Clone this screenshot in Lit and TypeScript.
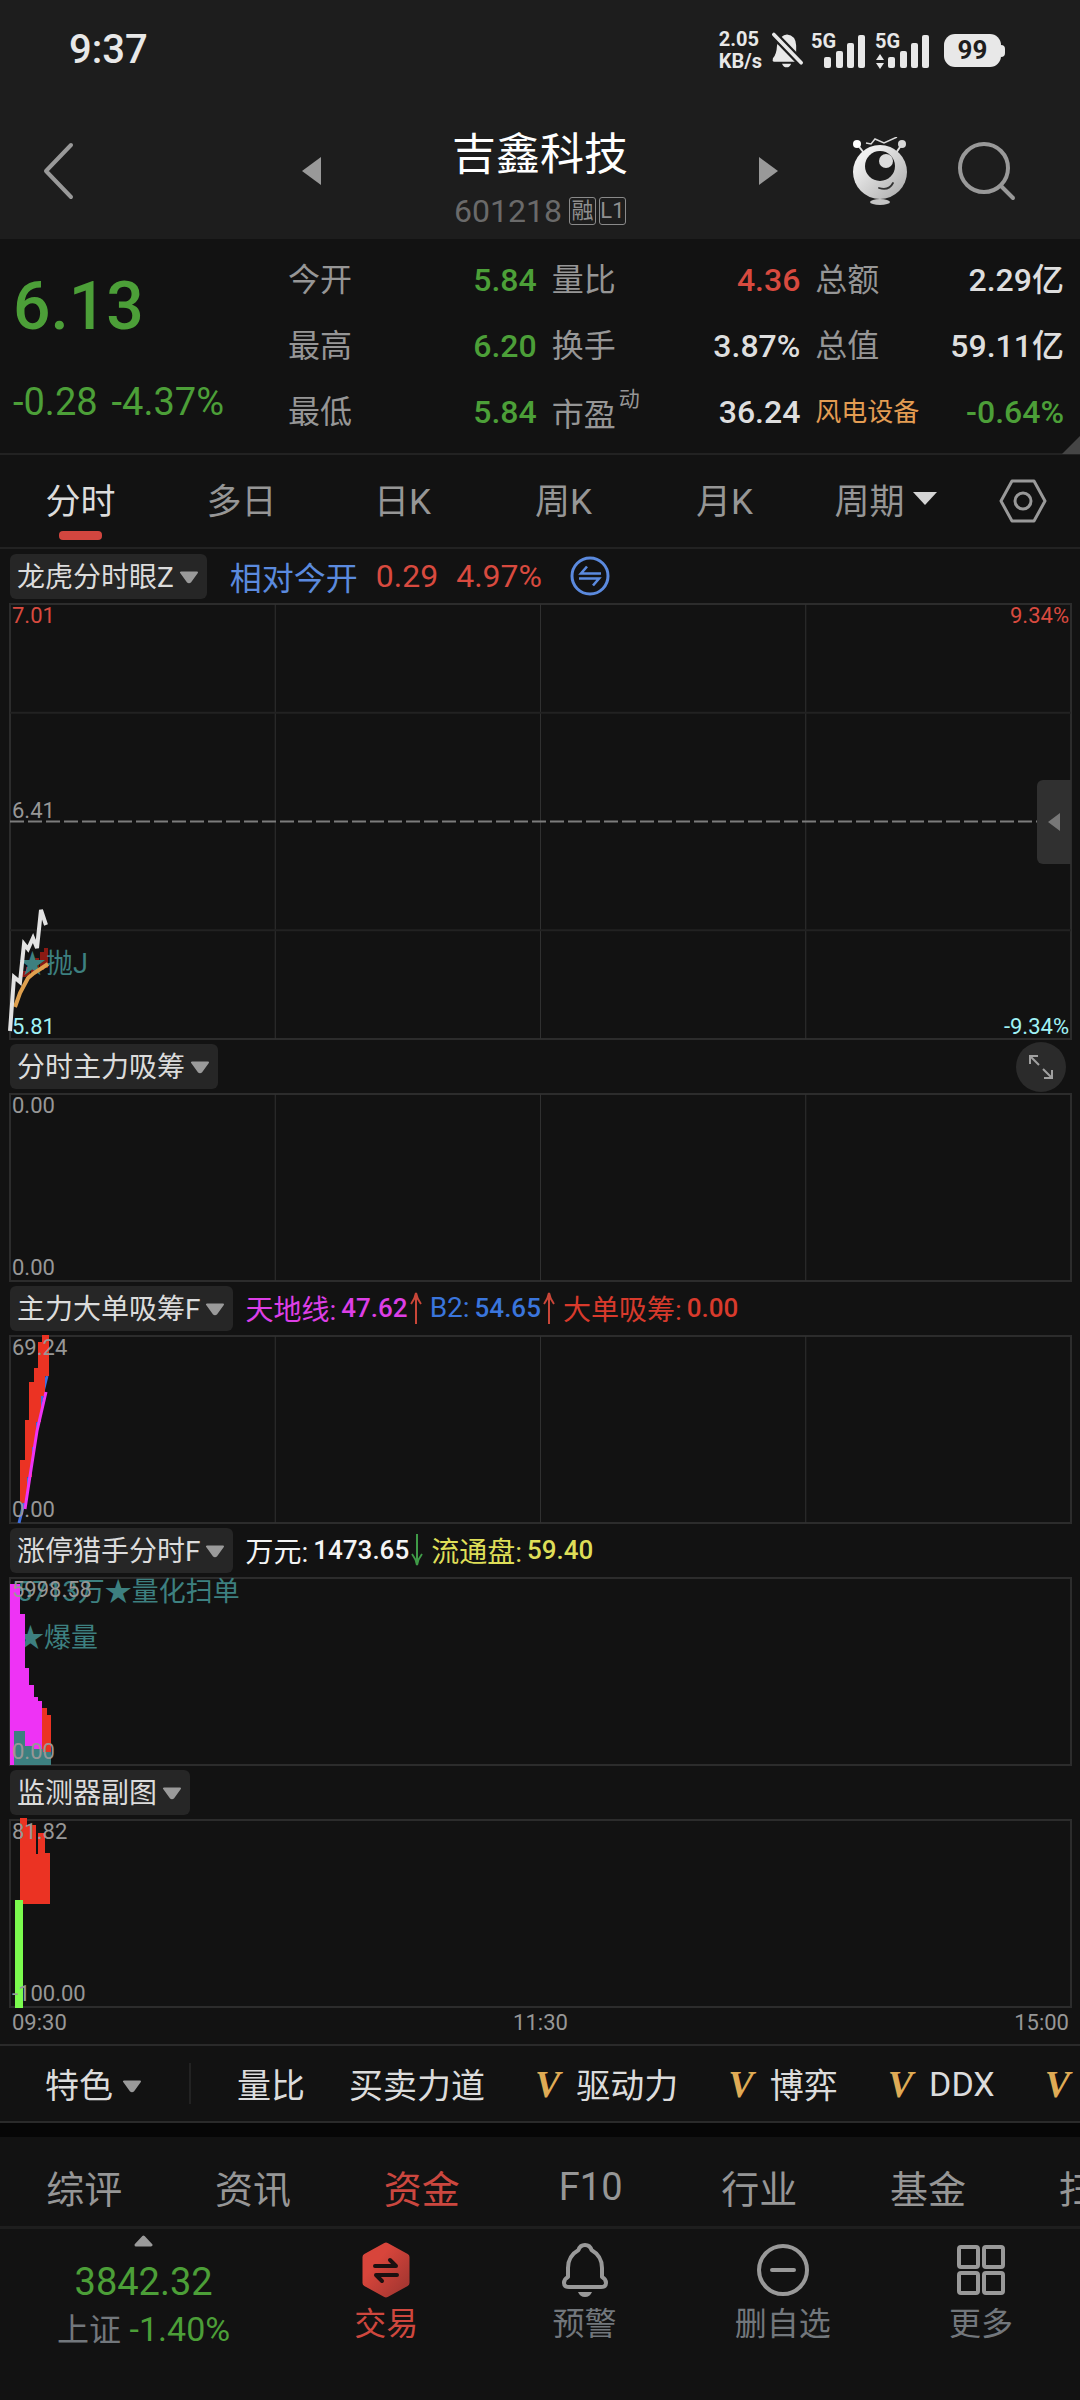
import { LitElement, html, svg, css, nothing } from "lit";
import type { TemplateResult, SVGTemplateResult } from "lit";
import { customElement, state } from "lit/decorators.js";
import { classMap } from "lit/directives/class-map.js";

/* x, y, width, height, colour */
type Bar = [number, number, number, number, string];

interface Legend {
  label: string;
  value: string;
  tone: string;
  trend?: "up" | "down";
}

const RED = "#eb3323";
const MAGENTA = "#ee33f5";
const TEAL = "#3d8080";
const LIME = "#7bfb4e";
const DARK_RED = "#8b1a14";

const QUOTES = [
  { label: "今开", value: "5.84", tone: "green" },
  { label: "量比", value: "4.36", tone: "red" },
  { label: "总额", value: "2.29亿", tone: "light" },
  { label: "最高", value: "6.20", tone: "green" },
  { label: "换手", value: "3.87%", tone: "light" },
  { label: "总值", value: "59.11亿", tone: "light" },
  { label: "最低", value: "5.84", tone: "green" },
  { label: "市盈", note: "动", value: "36.24", tone: "light" },
  { label: "风电设备", sector: true, value: "-0.64%", tone: "green" },
];

const PERIODS = ["分时", "多日", "日K", "周K", "月K"];

const TOOLS = [
  { label: "量比", vip: false },
  { label: "买卖力道", vip: false },
  { label: "驱动力", vip: true },
  { label: "博弈", vip: true },
  { label: "DDX", vip: true },
  { label: "", vip: true },
];

const SECTIONS = ["综评", "资讯", "资金", "F10", "行业", "基金", "扫雷"];

const PRICE_BARS: Bar[] = [
  [12, 367, 4, 6, DARK_RED],
  [16, 363, 4, 9, DARK_RED],
  [21, 358, 4, 12, DARK_RED],
  [25, 354, 4, 13, DARK_RED],
  [30, 348, 4, 18, DARK_RED],
  [34, 344, 4, 20, DARK_RED],
];

const ORDER_BARS: Bar[] = [
  [10, 124, 7, 43, RED],
  [15, 84, 7, 57, RED],
  [19, 46, 7, 65, RED],
  [24, 32, 7, 54, RED],
  [28, 6, 7, 54, RED],
  [32, -1, 7, 41, RED],
];

const HUNTER_BARS: Bar[] = [
  [0, 6, 10, 181, MAGENTA],
  [10, 36, 5, 151, MAGENTA],
  [15, 90, 4, 97, MAGENTA],
  [19, 107, 5, 80, MAGENTA],
  [24, 119, 4, 68, MAGENTA],
  [28, 123, 4, 64, MAGENTA],
  [32, 130, 5, 57, RED],
  [37, 137, 4, 50, RED],
  [4, 153, 11, 34, TEAL],
  [15, 168, 9, 19, TEAL],
  [24, 171, 9, 16, TEAL],
  [33, 174, 8, 13, TEAL],
];

const MONITOR_BARS: Bar[] = [
  [10, -2, 7, 86, RED],
  [17, 5, 9, 79, RED],
  [26, 34, 2, 50, RED],
  [28, 13, 7, 71, RED],
  [35, 33, 5, 51, RED],
  [5, 80, 8, 108, LIME],
];

const drawBars = (bars: Bar[]) =>
  bars.map(([x, y, w, h, fill]) => svg`<rect x=${x} y=${y} width=${w} height=${h} fill=${fill} />`);

const frame = svg`<rect width="100%" height="100%" fill="none" stroke="#2c2c2c" stroke-width="2" />`;

const columns = svg`
  <line x1="25%" x2="25%" y1="0" y2="100%" stroke="#303030" />
  <line x1="50%" x2="50%" y1="0" y2="100%" stroke="#303030" />
  <line x1="75%" x2="75%" y1="0" y2="100%" stroke="#303030" />`;

const caret = html`<svg class="caret" width="20" height="13" viewBox="0 0 20 13" aria-hidden="true">
  <path d="M2 1.5H18L11.5 10.5Q10 12 8.5 10.5Z" fill="#9a9a9a" stroke="#9a9a9a" stroke-width="2" stroke-linejoin="round" />
</svg>`;

@customElement("app-root")
export class AppRoot extends LitElement {
  @state() private period = "分时";
  @state() private section = "资金";

  static styles = css`
    :host {
      display: block;
      min-height: 100vh;
      overflow: hidden;
      background: #121212;
      color: #dcdcdc;
      font-family: Roboto, "Noto Sans CJK SC", sans-serif;
      font-size: 32px;
    }
    * { box-sizing: border-box; }
    button {
      margin: 0;
      padding: 0;
      border: 0;
      background: none;
      color: inherit;
      font: inherit;
      cursor: pointer;
    }
    svg { display: block; flex: none; }
    .caret { margin-top: 6px; }
    .green { color: #4c9f38; }
    .red { color: #d84a3f; }
    .light { color: #dedede; }

    /* status bar */
    .top { background: #1d1d1d; }
    .status {
      display: flex;
      justify-content: space-between;
      align-items: center;
      height: 100px;
      padding: 0 79px 0 69px;
      color: #e8e8e8;
    }
    .clock { font-size: 40px; font-weight: 500; line-height: 48px; }
    .signals { display: flex; align-items: center; gap: 8px; }
    .speed { margin-right: 2px; font-size: 20px; line-height: 22px; font-weight: 700; }
    .speed span { display: block; }
    .mute { width: 31px; }
    .tag5g { font-size: 20px; font-weight: 700; }
    .battery {
      width: 57px;
      height: 33px;
      margin-left: 5px;
      border-radius: 11px;
      background: #e8e8e8;
      color: #1d1d1d;
      font-size: 26px;
      font-weight: 700;
      line-height: 33px;
      text-align: center;
      position: relative;
    }
    .battery::after {
      content: "";
      position: absolute;
      right: -4px;
      top: 11px;
      width: 4px;
      height: 12px;
      border-radius: 0 4px 4px 0;
      background: #e8e8e8;
    }

    /* title bar */
    .title-bar {
      display: grid;
      grid-template-columns: 1fr 44% 1fr;
      align-items: center;
      height: 139px;
      padding-top: 3px;
    }
    .back { padding-left: 42px; justify-self: start; }
    .switcher { display: flex; justify-content: space-between; align-items: center; }
    .stock { text-align: center; padding-top: 16px; }
    .stock h1 {
      margin: 0;
      color: #fff;
      font-size: 44px;
      font-weight: 400;
      line-height: 64px;
    }
    .code {
      display: flex;
      justify-content: center;
      align-items: center;
      gap: 3px;
      color: #6a6a6a;
      line-height: 48px;
    }
    .code b {
      width: 27px;
      height: 28px;
      border: 1px solid #8a8a8a;
      border-radius: 3px;
      color: #8f8f8f;
      font-size: 22px;
      font-weight: 400;
      line-height: 26px;
      text-align: center;
    }
    .code b:first-of-type { margin-left: 4px; }
    .actions { display: flex; align-items: center; justify-content: flex-end; gap: 51px; padding-right: 64px; }

    /* quote */
    .quote {
      display: grid;
      grid-template-columns: 275fr 776fr;
      height: 216px;
      padding: 8px 16px 0 13px;
      border-bottom: 2px solid #222;
      position: relative;
    }
    .quote::after {
      content: "";
      position: absolute;
      right: 0;
      bottom: -1px;
      border-style: solid;
      border-width: 0 0 18px 18px;
      border-color: transparent transparent #454545 transparent;
    }
    .price { font-size: 66px; font-weight: 500; line-height: 80px; margin-top: 20px; }
    .change { display: flex; gap: 14px; font-size: 38px; line-height: 44px; margin-top: 33px; }
    .facts {
      display: grid;
      grid-template-columns: repeat(3, 1fr);
      column-gap: 15px;
      grid-auto-rows: 66px;
      margin: 0;
    }
    .fact { display: flex; justify-content: space-between; align-items: center; }
    .fact dt { color: #969696; line-height: 40px; }
    .fact dd { margin: 0; font-weight: 500; line-height: 40px; }
    .fact sup { font-size: 21px; line-height: 20px; vertical-align: 20px; margin-left: 3px; }
    .fact .sector { color: #e39c52; font-size: 26px; }

    /* period tabs */
    .periods {
      display: grid;
      grid-template-columns: repeat(6, 161fr) 114fr;
      height: 94px;
      border-bottom: 2px solid #222;
      color: #969696;
      font-size: 35px;
    }
    .periods button {
      display: flex;
      justify-content: center;
      align-items: center;
      gap: 8px;
      height: 90px;
      padding-bottom: 4px;
      position: relative;
    }
    .periods .settings { padding: 2px 0 0; }
    .periods .on { color: #dcdcdc; }
    .periods .on::after {
      content: "";
      position: absolute;
      bottom: 5px;
      width: 43px;
      height: 9px;
      border-radius: 4px;
      background: #d2463f;
    }

    /* indicators */
    .charts { padding: 0 9px 0 10px; }
    .head { display: flex; align-items: center; height: 55px; }
    .chip {
      display: flex;
      align-items: center;
      gap: 5px;
      height: 45px;
      padding: 0 8px 4px 7px;
      border-radius: 6px;
      background: #262626;
      font-size: 28px;
      white-space: nowrap;
    }
    .relative {
      display: flex;
      align-items: center;
      gap: 18px;
      margin-left: 23px;
      padding-bottom: 2px;
      color: #d84a3f;
      font-size: 32px;
    }
    .relative .name { color: #5b8ade; }
    .relative button { margin-left: 10px; }
    .legend { display: flex; align-items: center; gap: 6px; margin-left: 12px; padding-bottom: 2px; font-size: 28px; }
    .legend > span { display: flex; align-items: center; }
    .legend .num { margin-left: 5px; font-size: 26px; font-weight: 500; }
    .violet { color: #dd3fe6; }
    .blue { color: #3a75dc; }
    .scarlet { color: #d83a2c; }
    .white { color: #f4f4f4; }
    .yellow { color: #dede58; }
    .expand {
      display: grid;
      place-items: center;
      width: 50px;
      height: 50px;
      margin: 0 5px 0 auto;
      border-radius: 50%;
      background: #2b2b2b;
    }
    .chart {
      display: flex;
      flex-direction: column;
      justify-content: space-between;
      height: 187px;
      padding: 1px 2px 2px;
      position: relative;
      color: #979797;
      font-size: 22px;
      line-height: 22px;
    }
    .chart.main { height: 435px; justify-content: stretch; padding: 1px 2px; }
    .plot { position: absolute; inset: 0; width: 100%; height: 100%; overflow: visible; }
    .signal { font-size: 27px; fill: #3d8080; }
    .half { display: flex; flex: 1; flex-direction: column; justify-content: space-between; }
    .half.low { justify-content: flex-end; }
    .scale { display: flex; justify-content: space-between; position: relative; }
    .scale.red { color: #d84a3f; }
    .scale.cyan { color: #a0f2f6; }
    .drawer {
      display: grid;
      place-items: center;
      position: absolute;
      right: 0;
      top: 176px;
      width: 34px;
      height: 84px;
      border-radius: 6px 0 0 6px;
      background: #303030;
    }
    .times {
      display: grid;
      grid-template-columns: 1fr auto 1fr;
      padding: 5px 2px 10px;
      color: #979797;
      font-size: 22px;
      line-height: 22px;
    }
    .times span:last-child { text-align: right; }

    /* tool strip */
    .tools {
      display: flex;
      align-items: center;
      height: 79px;
      padding-left: 45px;
      border-top: 2px solid #2a2a2a;
      border-bottom: 2px solid #2a2a2a;
      font-size: 34px;
      white-space: nowrap;
    }
    .feature { display: flex; align-items: center; gap: 9px; padding-right: 47px; }
    .strip { display: flex; align-items: center; gap: 44px; padding-left: 46px; border-left: 2px solid #222; height: 41px; }
    .strip button { display: flex; align-items: center; gap: 16px; }
    .strip .premium { margin-left: 6px; }
    .vip { color: #dfab55; font: italic 700 38px/40px "Liberation Serif", serif; }

    /* section tabs */
    .sections {
      display: flex;
      height: 106px;
      padding-top: 14px;
      border-bottom: 3px solid #1e1e1e;
      box-shadow: inset 0 14px #060606;
      color: #969696;
      font-size: 38px;
      white-space: nowrap;
    }
    .sections button { flex: 0 0 calc(100% / 6.4); padding-top: 10px; }
    .sections .on { color: #cb473f; }

    /* bottom bar */
    .dock {
      display: grid;
      grid-template-columns: 287fr repeat(4, 198fr);
      padding: 6px 0 48px;
      color: #72777c;
    }
    .index, .dock .item { display: flex; flex-direction: column; align-items: center; }
    .index .points { font-size: 38px; line-height: 44px; margin-top: 13px; }
    .index .move { font-size: 34px; line-height: 44px; margin-top: 3px; }
    .index .market { color: #72777c; font-size: 32px; }
    .dock .item { padding-top: 7px; gap: 4px; line-height: 44px; }
    .dock .trade { color: #cf473e; }
  `;

  private signal(data: boolean): TemplateResult {
    return html`<svg width="56" height="49" viewBox="0 -6 56 49" fill="#e8e8e8" aria-label="5G">
      <text class="tag5g" x="0" y="16">5G</text>
      <rect x="13" y="25" width="7" height="11" rx="2" />
      <rect x="25" y="19" width="7" height="17" rx="2" />
      <rect x="36" y="11" width="7" height="25" rx="2" />
      <rect x="47" y="3" width="7" height="33" rx="2" />
      ${data ? svg`<path d="M1 28L5 22L9 28ZM1 31L5 37L9 31Z" />` : nothing}
    </svg>`;
  }

  private chip(name: string): TemplateResult {
    return html`<button class="chip">${name}${caret}</button>`;
  }

  private legend(items: Legend[]): TemplateResult {
    return html`<div class="legend">
      ${items.map(
        (i) => html`<span class=${i.tone}>${i.label}:<span class="num">${i.value}</span>
          ${i.trend
            ? html`<svg width="16" height="34" viewBox="0 0 16 34" fill="none" stroke-width="2"
                stroke=${i.trend === "up" ? "#c94638" : "#3f9a47"}>
                <path d=${i.trend === "up" ? "M8 33V2M3 13Q7 8 8 2Q9 8 13 13" : "M8 1V32M3 21Q7 26 8 32Q9 26 13 21"} />
              </svg>`
            : nothing}</span>`
      )}
    </div>`;
  }

  private chart(high: string, low: string, plot: SVGTemplateResult): TemplateResult {
    return html`<div class="chart">
      <svg class="plot" aria-hidden="true">${frame}${plot}</svg>
      <div class="scale"><span>${high}</span></div>
      <div class="scale"><span>${low}</span></div>
    </div>`;
  }

  private renderTop(): TemplateResult {
    return html`<header class="top">
      <div class="status">
        <span class="clock">9:37</span>
        <div class="signals">
          <div class="speed"><span>2.05</span><span>KB/s</span></div>
          <svg class="mute" height="38" viewBox="0 0 34 38" overflow="visible" aria-label="静音">
            <path d="M10 5Q13 2 16.500 2Q26 3 26.500 14V22Q29 28 31 29V32H2Q0 31 1 28Q5 24 5.500 14Q7 8 10 5ZM11 34H21Q19.500 38 16 38Q12.500 38 11 34Z" fill="#e8e8e8" />
            <path d="M2 2L32 33" stroke="#1d1d1d" stroke-width="9" />
            <path d="M2 2L32 33" stroke="#e8e8e8" stroke-width="4" stroke-linecap="round" />
          </svg>
          ${this.signal(false)}
          ${this.signal(true)}
          <div class="battery">99</div>
        </div>
      </div>
      <div class="title-bar">
        <button class="back" aria-label="返回">
          <svg width="32" height="58" viewBox="0 0 32 58" fill="none" stroke="#999" stroke-width="4" stroke-linecap="round" stroke-linejoin="round">
            <path d="M29 3L4 29L29 55" />
          </svg>
        </button>
        <div class="switcher">
          <button aria-label="上一只"><svg width="19" height="28" viewBox="0 0 19 28"><path d="M19 0V28L0 14Z" fill="#999" /></svg></button>
          <div class="stock">
            <h1>吉鑫科技</h1>
            <div class="code">601218<b>融</b><b>L1</b></div>
          </div>
          <button aria-label="下一只"><svg width="19" height="28" viewBox="0 0 19 28"><path d="M0 0V28L19 14Z" fill="#999" /></svg></button>
        </div>
        <div class="actions">
          <button aria-label="智能助手">
            <svg width="54" height="68" viewBox="0 0 54 68">
              <defs>
                <linearGradient id="shell" x1="0" y1="0" x2="1" y2="1">
                  <stop offset="0.2" stop-color="#f0f0f0" /><stop offset="1" stop-color="#a8a8a8" />
                </linearGradient>
              </defs>
              <path d="M13 6L18 7L22 2L31 6L44 0" fill="none" stroke="#d8d8d8" stroke-width="1.500" />
              <path d="M4 7L11 16M49 7L43 16" stroke="#e0e0e0" stroke-width="2" />
              <circle cx="4" cy="7" r="4" fill="#fff" />
              <circle cx="49" cy="7" r="4" fill="#d8d8d8" />
              <circle cx="27" cy="35" r="27" fill="url(#shell)" />
              <circle cx="27" cy="29" r="15" fill="#1b1b1b" />
              <circle cx="33" cy="24" r="7" fill="#dcdcdc" />
              <path d="M26 51Q36 54 40 46" fill="none" stroke="#333" stroke-width="1.800" stroke-linecap="round" />
              <ellipse cx="27" cy="65" rx="10" ry="3" fill="#c4c4c4" />
            </svg>
          </button>
          <button aria-label="搜索">
            <svg width="58" height="60" viewBox="0 0 58 60" fill="none" stroke="#999" stroke-width="4" stroke-linecap="round">
              <circle cx="26" cy="27" r="24" /><path d="M43 45L55 57" />
            </svg>
          </button>
        </div>
      </div>
    </header>`;
  }

  private renderQuote(): TemplateResult {
    return html`<section class="quote">
      <div class="green">
        <div class="price">6.13</div>
        <div class="change"><span>-0.28</span><span>-4.37%</span></div>
      </div>
      <dl class="facts">
        ${QUOTES.map(
          (q) => html`<div class="fact">
            <dt class=${classMap({ sector: !!q.sector })}>${q.label}${q.note ? html`<sup>${q.note}</sup>` : nothing}</dt>
            <dd class=${q.tone}>${q.value}</dd>
          </div>`
        )}
      </dl>
    </section>`;
  }

  private renderPeriods(): TemplateResult {
    return html`<nav class="periods">
      ${PERIODS.map(
        (p) => html`<button class=${classMap({ on: p === this.period })} @click=${() => (this.period = p)}>${p}</button>`
      )}
      <button>周期<svg width="24" height="13" viewBox="0 0 24 13"><path d="M0 0H24L12 13Z" fill="#d4d4d4" /></svg></button>
      <button class="settings" aria-label="设置">
        <svg width="48" height="44" viewBox="0 0 48 44" fill="none" stroke="#999" stroke-width="3" stroke-linejoin="round">
          <path d="M13 2H35L46 22L35 42H13L2 22Z" /><circle cx="24" cy="22" r="8" />
        </svg>
      </button>
    </nav>`;
  }

  private renderCharts(): TemplateResult {
    return html`<main class="charts">
      <div class="head">
        ${this.chip("龙虎分时眼Z")}
        <div class="relative">
          <span class="name">相对今开</span><span>0.29</span><span>4.97%</span>
          <button aria-label="切换">
            <svg width="40" height="40" viewBox="0 0 40 40" fill="none" stroke="#5b8ade" stroke-width="3">
              <circle cx="20" cy="20" r="18" />
              <path d="M31 17.500H11L17 10.500M9 22.500H29L23 29.500" stroke-width="2.600" />
            </svg>
          </button>
        </div>
      </div>
      <div class="chart main">
        <svg class="plot" aria-hidden="true">
          ${frame}${columns}
          <line x1="0" x2="100%" y1="25%" y2="25%" stroke="#222" stroke-width="2" />
          <line x1="0" x2="100%" y1="75%" y2="75%" stroke="#222" stroke-width="2" />
          <line x1="0" x2="100%" y1="50%" y2="50%" stroke="#7c7c7c" stroke-width="2" stroke-dasharray="14 4" />
          ${drawBars(PRICE_BARS)}
          <text class="signal" x="9" y="369">★抛J</text>
          <polyline points="5,403 10,389 18,374 24,369 38,360" fill="none" stroke="#dfa04e" stroke-width="4" />
          <polyline points="0,427 4,373 10,378 14,340 18,345 23,334 27,344 31,306 36,321" fill="none" stroke="#e2e2e2" stroke-width="4" />
        </svg>
        <div class="half">
          <div class="scale red"><span>7.01</span><span>9.34%</span></div>
          <div class="scale"><span>6.41</span></div>
        </div>
        <div class="half low">
          <div class="scale cyan"><span>5.81</span><span>-9.34%</span></div>
        </div>
        <button class="drawer" aria-label="展开盘口">
          <svg width="12" height="18" viewBox="0 0 12 18"><path d="M12 0V18L0 9Z" fill="#777" /></svg>
        </button>
      </div>

      <div class="head">
        ${this.chip("分时主力吸筹")}
        <button class="expand" aria-label="全屏">
          <svg width="26" height="26" viewBox="0 0 26 26" fill="none" stroke="#a0a0a0" stroke-width="2">
            <path d="M2 10V2H10M2 2L11 11M24 16V24H16M24 24L15 15" />
          </svg>
        </button>
      </div>
      ${this.chart("0.00", "0.00", columns)}

      <div class="head">
        ${this.chip("主力大单吸筹F")}
        ${this.legend([
          { label: "天地线", value: "47.62", tone: "violet", trend: "up" },
          { label: "B2", value: "54.65", tone: "blue", trend: "up" },
          { label: "大单吸筹", value: "0.00", tone: "scarlet" },
        ])}
      </div>
      ${this.chart(
        "69.24",
        "0.00",
        svg`${columns}
          <polyline points="9,187 14,167 19,140 23,111 28,85 32,60 37,40" fill="none" stroke="#3f6fe0" stroke-width="3" />
          ${drawBars(ORDER_BARS)}
          <polyline points="15,173 20,140 27,95 36,56" fill="none" stroke=${MAGENTA} stroke-width="3" />`
      )}

      <div class="head">
        ${this.chip("涨停猎手分时F")}
        ${this.legend([
          { label: "万元", value: "1473.65", tone: "white", trend: "down" },
          { label: "流通盘", value: "59.40", tone: "yellow" },
        ])}
      </div>
      ${this.chart(
        "5998.58",
        "0.00",
        svg`<text class="signal" x="7" y="23">5713万★量化扫单</text>
          <text class="signal" x="7" y="69">★爆量</text>
          ${drawBars(HUNTER_BARS)}`
      )}

      <div class="head">${this.chip("监测器副图")}</div>
      ${this.chart("81.82", "-100.00", svg`${drawBars(MONITOR_BARS)}`)}
      <div class="times"><span>09:30</span><span>11:30</span><span>15:00</span></div>
    </main>`;
  }

  private renderBottom(): TemplateResult {
    return html`<div class="tools">
        <button class="feature">特色${caret}</button>
        <div class="strip">
          ${TOOLS.map(
            (t) => html`<button class=${classMap({ premium: t.vip })} aria-label=${t.label || "VIP"}>
              ${t.vip ? html`<span class="vip">V</span>` : nothing}${t.label}
            </button>`
          )}
        </div>
      </div>
      <nav class="sections">
        ${SECTIONS.map(
          (s) => html`<button class=${classMap({ on: s === this.section })} @click=${() => (this.section = s)}>${s}</button>`
        )}
      </nav>
      <footer class="dock">
        <button class="index green">
          <svg width="19" height="12" viewBox="0 0 19 12"><path d="M9.500 2L17 10H2Z" fill="#9a9a9a" stroke="#9a9a9a" stroke-width="3" stroke-linejoin="round" /></svg>
          <span class="points">3842.32</span>
          <span class="move"><span class="market">上证</span> -1.40%</span>
        </button>
        <button class="item trade">
          <svg width="48" height="56" viewBox="0 0 48 56">
            <defs>
              <linearGradient id="gem" x1="0" y1="0" x2="1" y2="1">
                <stop offset="0.3" stop-color="#d8453b" /><stop offset="1" stop-color="#a03530" />
              </linearGradient>
            </defs>
            <path d="M24 4L44 15V41L24 52L4 41V15Z" fill="url(#gem)" stroke="url(#gem)" stroke-width="7" stroke-linejoin="round" />
            <path d="M13 24H34L28 18M35 33H14L20 39" fill="none" stroke="#1c1010" stroke-width="4" stroke-linecap="round" stroke-linejoin="round" />
          </svg>
          交易
        </button>
        <button class="item">
          <svg width="48" height="56" viewBox="0 0 48 56" fill="none" stroke="#999" stroke-width="4" stroke-linejoin="round">
            <path d="M24 3Q29 3 30.500 8Q41 14 41 26V35Q45 37 45 41Q45 45 40 45H8Q3 45 3 41Q3 37 7 35V26Q7 14 17.500 8Q19 3 24 3Z" />
            <path d="M17 50H31Q29 55 24 55Q19 55 17 50Z" fill="#999" stroke="none" />
          </svg>
          预警
        </button>
        <button class="item">
          <svg width="52" height="56" viewBox="0 0 52 56" fill="none" stroke="#999" stroke-width="4" stroke-linecap="round">
            <circle cx="26" cy="28" r="24" /><path d="M15 28H37" />
          </svg>
          删自选
        </button>
        <button class="item">
          <svg width="48" height="56" viewBox="0 0 48 56" fill="none" stroke="#999" stroke-width="4">
            <rect x="2" y="5" width="19" height="20" rx="2" /><rect x="27" y="5" width="19" height="20" rx="2" />
            <rect x="2" y="31" width="19" height="20" rx="2" /><rect x="27" y="31" width="19" height="20" rx="2" />
          </svg>
          更多
        </button>
      </footer>`;
  }

  render(): TemplateResult {
    return html`${this.renderTop()}${this.renderQuote()}${this.renderPeriods()}${this.renderCharts()}${this.renderBottom()}`;
  }
}
